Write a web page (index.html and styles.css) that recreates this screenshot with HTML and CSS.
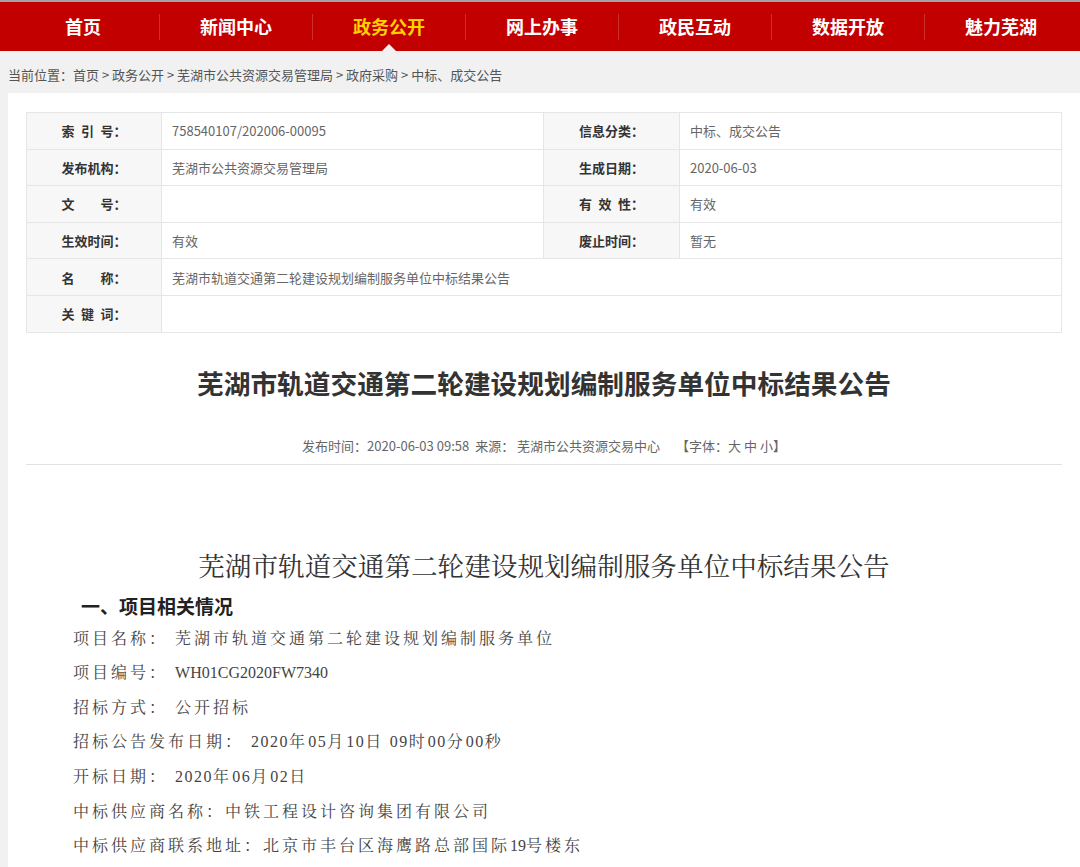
FILE: index.html
```html
<!DOCTYPE html>
<html lang="zh-CN">
<head>
<meta charset="utf-8">
<title>芜湖市轨道交通第二轮建设规划编制服务单位中标结果公告</title>
<link rel="stylesheet" href="styles.css">
</head>
<body>
<div class="topline"></div>
<nav class="nav">
  <a class="nav-item">首页</a><span class="nav-sep"></span>
  <a class="nav-item">新闻中心</a><span class="nav-sep"></span>
  <a class="nav-item active">政务公开</a><span class="nav-sep"></span>
  <a class="nav-item">网上办事</a><span class="nav-sep"></span>
  <a class="nav-item">政民互动</a><span class="nav-sep"></span>
  <a class="nav-item">数据开放</a><span class="nav-sep"></span>
  <a class="nav-item">魅力芜湖</a>
</nav>
<div class="crumb">当前位置：首页 &gt; 政务公开 &gt; 芜湖市公共资源交易管理局 &gt; 政府采购 &gt; 中标、成交公告</div>
<main class="panel">
  <table class="info">
    <colgroup><col class="c1"><col class="c2"><col class="c3"><col class="c4"></colgroup>
    <tr><th>索&ensp;引&ensp;号：</th><td>758540107/202006-00095</td><th>信息分类：</th><td>中标、成交公告</td></tr>
    <tr><th>发布机构：</th><td>芜湖市公共资源交易管理局</td><th>生成日期：</th><td>2020-06-03</td></tr>
    <tr><th>文&emsp;&emsp;号：</th><td></td><th>有&ensp;效&ensp;性：</th><td>有效</td></tr>
    <tr><th>生效时间：</th><td>有效</td><th>废止时间：</th><td>暂无</td></tr>
    <tr><th>名&emsp;&emsp;称：</th><td colspan="3">芜湖市轨道交通第二轮建设规划编制服务单位中标结果公告</td></tr>
    <tr><th>关&ensp;键&ensp;词：</th><td colspan="3"></td></tr>
  </table>
  <h1 class="title">芜湖市轨道交通第二轮建设规划编制服务单位中标结果公告</h1>
  <div class="meta"><span>发布时间：2020-06-03 09:58</span><span class="gap1">来源： 芜湖市公共资源交易中心</span><span class="gap2">【字体：大 中 小】</span></div>
  <article class="content">
    <h2 class="doc-title">芜湖市轨道交通第二轮建设规划编制服务单位中标结果公告</h2>
    <h3 class="sec">一、项目相关情况</h3>
    <p class="line"><span class="cj">项目名称： 芜湖市轨道交通第二轮建设规划编制服务单位</span></p>
    <p class="line"><span class="cj">项目编号： </span><span class="lat">WH01CG2020FW7340</span></p>
    <p class="line"><span class="cj">招标方式： 公开招标</span></p>
    <p class="line"><span class="cj">招标公告发布日期： </span><span class="dt">2020<span class="cj">年</span>05<span class="cj">月</span>10<span class="cj">日</span> 09<span class="cj">时</span>00<span class="cj">分</span>00<span class="cj">秒</span></span></p>
    <p class="line"><span class="cj">开标日期： </span><span class="dt">2020<span class="cj">年</span>06<span class="cj">月</span>02<span class="cj">日</span></span></p>
    <p class="line"><span class="cj">中标供应商名称：中铁工程设计咨询集团有限公司</span></p>
    <p class="line"><span class="cj">中标供应商联系地址：北京市丰台区海鹰路总部国际</span><span class="lat">19</span><span class="cj">号楼东</span></p>
  </article>
</main>
</body>
</html>
```
FILE: styles.css
```css
* { box-sizing: border-box; }
html, body { margin: 0; padding: 0; }
body {
  background: #f1f1f1;
  font-family: "Noto Sans CJK SC", "Microsoft YaHei", sans-serif;
  color: #333;
  width: 1080px;
  overflow: hidden;
}
.topline { height: 2px; background: #a3a3a3; }
.nav {
  height: 49px;
  background: #c30000;
  display: flex;
  align-items: center;
  padding-left: 7px;
}
.nav-item {
  position: relative;
  width: 152px;
  height: 49px;
  line-height: 49px;
  text-align: center;
  color: #fff;
  font-size: 18px;
  font-weight: bold;
}
.nav-item.active { color: #ffd200; }
.nav-item.active::after {
  content: "";
  position: absolute;
  left: 50%;
  bottom: 0;
  margin-left: -7px;
  border-left: 7px solid transparent;
  border-right: 7px solid transparent;
  border-bottom: 7px solid #f1f1f1;
}
.nav-sep {
  width: 1px;
  height: 26px;
  background: rgba(255, 255, 255, 0.18);
}
.crumb {
  height: 42px;
  padding: 15px 0 0 8px;
  font-size: 13px;
  line-height: 18px;
  color: #555;
}
.panel {
  margin-left: 8px;
  background: #fff;
  padding: 19px 18px 40px;
  min-height: 800px;
}
.info {
  width: 100%;
  border-collapse: collapse;
  table-layout: fixed;
  font-size: 13px;
}
.c1 { width: 135px; }
.c2 { width: 382px; }
.c3 { width: 136px; }
.info th, .info td {
  border: 1px solid #e6e6e6;
  height: 36.6px;
  padding: 0;
}
.info th {
  background: #f7f7f7;
  color: #333;
  font-weight: bold;
  text-align: center;
}
.info td {
  color: #666;
  padding-left: 10px;
  text-align: left;
}
.title {
  margin: 32px 0 0;
  font-size: 26.7px;
  line-height: 36px;
  font-weight: bold;
  text-align: center;
  color: #333;
}
.meta {
  margin-top: 35px;
  padding-bottom: 8px;
  border-bottom: 1px solid #e2e2e2;
  text-align: center;
  font-size: 13px;
  line-height: 20px;
  color: #666;
}
.gap1 { margin-left: 6px; }
.gap2 { margin-left: 16px; }
.content {
  font-family: "Noto Serif CJK SC", "Liberation Serif", "Noto Sans CJK SC", serif;
  color: #444;
}
.doc-title {
  margin: 82px 0 0;
  font-size: 26.6px;
  line-height: 36px;
  font-weight: normal;
  text-align: center;
  color: #333;
}
.sec {
  margin: 8px 0 0;
  padding-left: 55px;
  font-family: "Noto Sans CJK SC", sans-serif;
  font-size: 19px;
  line-height: 30px;
  font-weight: bold;
  color: #222;
}
.line {
  margin: 0;
  padding-left: 47px;
  font-size: 16px;
  line-height: 34px;
  white-space: nowrap;
}
.cj {
  font-family: "Noto Serif CJK SC", "Noto Sans CJK SC", serif;
  letter-spacing: 3px;
}
.lat {
  font-family: "Liberation Serif", serif;
  letter-spacing: 0;
}
.dt {
  font-family: "Liberation Serif", serif;
  letter-spacing: 1.5px;
}
```
